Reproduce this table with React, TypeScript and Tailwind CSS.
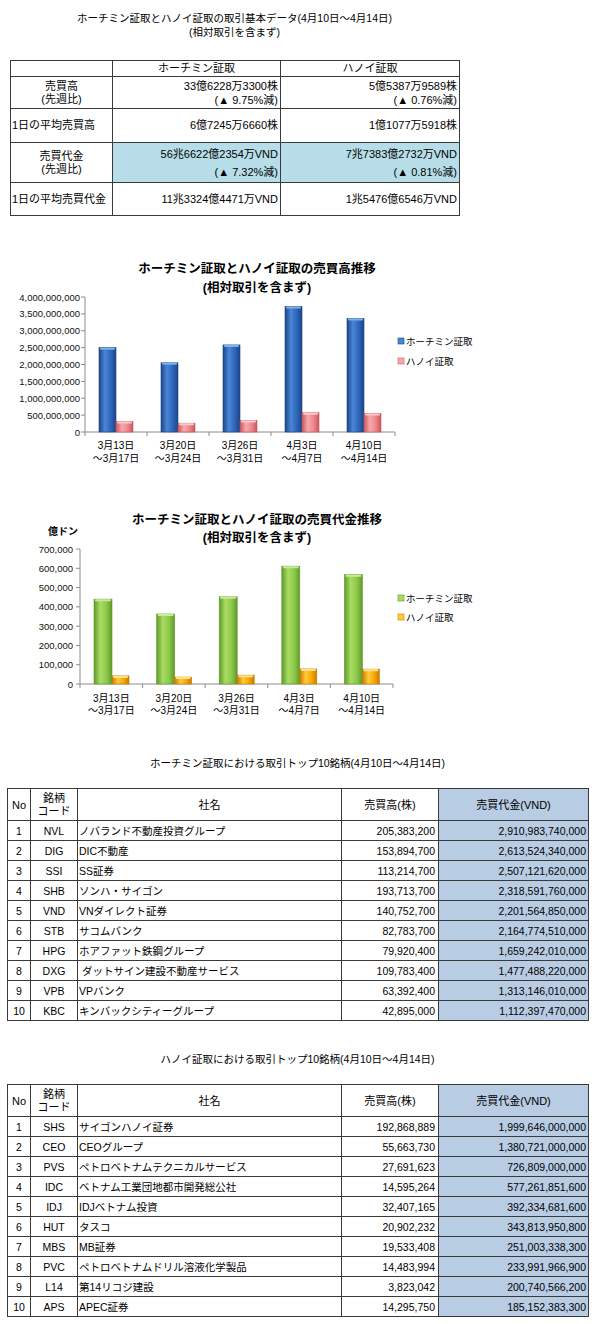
import React from 'react';

const FONT = "font-['Liberation_Sans','Noto_Sans_CJK_JP',sans-serif]";

type Stops = [string, string, string];

interface ChartProps {
  id: string;
  title: string;
  unit?: string;
  ticks: string[];
  axisX: number;
  labelRight: number;
  catW: number;
  top: number;
  base: number;
  max: number;
  a: number[];
  b: number[];
  aOff: number;
  aW: number;
  bOff: number;
  bW: number;
  colA: Stops;
  colB: Stops;
  capA: string;
  capB: string;
  titleY: [number, number];
  labelY: [number, number];
  legendY: [number, number];
}

const cats: [string, string][] = [
  ['3月13日', '～3月17日'],
  ['3月20日', '～3月24日'],
  ['3月26日', '～3月31日'],
  ['4月3日', '～4月7日'],
  ['4月10日', '～4月14日'],
];

const BarChart: React.FC<ChartProps> = (p) => {
  const plotRight = p.axisX + p.catW * 5;
  const step = (p.base - p.top) / (p.ticks.length - 1);
  const h = (v: number) => (v / p.max) * (p.base - p.top);

  return (
    <svg width={600} height={220} viewBox="0 0 600 220" className={`block ${FONT}`}>
      <defs>
        <linearGradient id={`${p.id}-a`} x1="0" x2="1" y1="0" y2="0">
          <stop offset="0%" stopColor={p.colA[0]} />
          <stop offset="35%" stopColor={p.colA[1]} />
          <stop offset="70%" stopColor={p.colA[2]} />
          <stop offset="100%" stopColor={p.colA[0]} />
        </linearGradient>
        <linearGradient id={`${p.id}-b`} x1="0" x2="1" y1="0" y2="0">
          <stop offset="0%" stopColor={p.colB[0]} />
          <stop offset="35%" stopColor={p.colB[1]} />
          <stop offset="70%" stopColor={p.colB[2]} />
          <stop offset="100%" stopColor={p.colB[0]} />
        </linearGradient>
      </defs>

      <text x={257} y={p.titleY[0]} textAnchor="middle" dominantBaseline="central" fontSize={12.5} fontWeight={700}>
        {p.title}
      </text>
      <text x={257} y={p.titleY[1]} textAnchor="middle" dominantBaseline="central" fontSize={12.5} fontWeight={700}>
        (相対取引を含まず)
      </text>

      {p.unit && (
        <text x={48} y={30} dominantBaseline="central" fontSize={10} fontWeight={700}>
          {p.unit}
        </text>
      )}

      {/* y axis */}
      {p.ticks.map((t, i) => {
        const y = p.base - step * i;
        return (
          <g key={t}>
            <text x={p.labelRight} y={y} textAnchor="end" dominantBaseline="central" fontSize={9.5} fill="#111">
              {t}
            </text>
            <line x1={p.axisX - 4} x2={p.axisX} y1={y} y2={y} stroke="#8c8c8c" strokeWidth={1} />
          </g>
        );
      })}
      <line x1={p.axisX} x2={p.axisX} y1={p.top} y2={p.base} stroke="#8c8c8c" strokeWidth={1} />
      <line x1={p.axisX} x2={plotRight} y1={p.base} y2={p.base} stroke="#8c8c8c" strokeWidth={1} />
      {[0, 1, 2, 3, 4, 5].map((i) => (
        <line
          key={i}
          x1={p.axisX + p.catW * i}
          x2={p.axisX + p.catW * i}
          y1={p.base}
          y2={p.base + 4}
          stroke="#8c8c8c"
          strokeWidth={1}
        />
      ))}

      {/* bars */}
      {cats.map((c, i) => {
        const x0 = p.axisX + p.catW * i;
        const ha = h(p.a[i]);
        const hb = h(p.b[i]);
        return (
          <g key={c[0]}>
            <rect x={x0 + p.aOff} y={p.base - ha} width={p.aW} height={ha} fill={`url(#${p.id}-a)`} stroke={p.colA[0]} strokeWidth={0.6} />
            <rect x={x0 + p.aOff + 1} y={p.base - ha} width={p.aW - 2} height={2} rx={1} fill={p.capA} />
            <rect x={x0 + p.bOff} y={p.base - hb} width={p.bW} height={hb} fill={`url(#${p.id}-b)`} stroke={p.colB[0]} strokeWidth={0.6} />
            <rect x={x0 + p.bOff + 1} y={p.base - hb} width={p.bW - 2} height={2} rx={1} fill={p.capB} />
            <text x={x0 + p.catW / 2} y={p.labelY[0]} textAnchor="middle" dominantBaseline="central" fontSize={10}>
              {c[0]}
            </text>
            <text x={x0 + p.catW / 2} y={p.labelY[1]} textAnchor="middle" dominantBaseline="central" fontSize={10}>
              {c[1]}
            </text>
          </g>
        );
      })}

      {/* legend */}
      <rect x={398} y={p.legendY[0] - 3} width={6} height={6} fill={p.colA[1]} stroke={p.colA[0]} strokeWidth={0.6} />
      <text x={406} y={p.legendY[0]} dominantBaseline="central" fontSize={9.5}>
        ホーチミン証取
      </text>
      <rect x={398} y={p.legendY[1] - 3} width={6} height={6} fill={p.colB[1]} stroke={p.colB[0]} strokeWidth={0.6} />
      <text x={406} y={p.legendY[1]} dominantBaseline="central" fontSize={9.5}>
        ハノイ証取
      </text>
    </svg>
  );
};

interface Row {
  code: string;
  name: string;
  vol: string;
  val: string;
}

const hcmRows: Row[] = [
  { code: 'NVL', name: 'ノバランド不動産投資グループ', vol: '205,383,200', val: '2,910,983,740,000' },
  { code: 'DIG', name: 'DIC不動産', vol: '153,894,700', val: '2,613,524,340,000' },
  { code: 'SSI', name: 'SS証券', vol: '113,214,700', val: '2,507,121,620,000' },
  { code: 'SHB', name: 'ソンハ・サイゴン', vol: '193,713,700', val: '2,318,591,760,000' },
  { code: 'VND', name: 'VNダイレクト証券', vol: '140,752,700', val: '2,201,564,850,000' },
  { code: 'STB', name: 'サコムバンク', vol: '82,783,700', val: '2,164,774,510,000' },
  { code: 'HPG', name: 'ホアファット鉄鋼グループ', vol: '79,920,400', val: '1,659,242,010,000' },
  { code: 'DXG', name: '\u00a0ダットサイン建設不動産サービス', vol: '109,783,400', val: '1,477,488,220,000' },
  { code: 'VPB', name: 'VPバンク', vol: '63,392,400', val: '1,313,146,010,000' },
  { code: 'KBC', name: 'キンバックシティーグループ', vol: '42,895,000', val: '1,112,397,470,000' },
];

const hnxRows: Row[] = [
  { code: 'SHS', name: 'サイゴンハノイ証券', vol: '192,868,889', val: '1,999,646,000,000' },
  { code: 'CEO', name: 'CEOグループ', vol: '55,663,730', val: '1,380,721,000,000' },
  { code: 'PVS', name: 'ペトロベトナムテクニカルサービス', vol: '27,691,623', val: '726,809,000,000' },
  { code: 'IDC', name: 'ベトナム工業団地都市開発総公社', vol: '14,595,264', val: '577,261,851,600' },
  { code: 'IDJ', name: 'IDJベトナム投資', vol: '32,407,165', val: '392,334,681,600' },
  { code: 'HUT', name: 'タスコ', vol: '20,902,232', val: '343,813,950,800' },
  { code: 'MBS', name: 'MB証券', vol: '19,533,408', val: '251,003,338,300' },
  { code: 'PVC', name: 'ペトロベトナムドリル溶液化学製品', vol: '14,483,994', val: '233,991,966,900' },
  { code: 'L14', name: '第14リコジ建設', vol: '3,823,042', val: '200,740,566,200' },
  { code: 'APS', name: 'APEC証券', vol: '14,295,750', val: '185,152,383,300' },
];

const TopTable: React.FC<{ title: string; rows: Row[] }> = ({ title, rows }) => (
  <div>
    <p className="ml-[7px] w-[581px] text-center text-[10.5px] leading-[14px]">{title}</p>
    <table className="ml-[7px] mt-[18px] w-[581px] table-fixed border-collapse text-[10.5px] leading-[12px]">
      <colgroup>
        <col className="w-[23px]" />
        <col className="w-[47px]" />
        <col className="w-[264px]" />
        <col className="w-[97px]" />
        <col className="w-[150px]" />
      </colgroup>
      <thead>
        <tr className="h-[32px] text-[11px]">
          <th className="border border-[#3a3a3a] font-normal">No</th>
          <th className="border border-[#3a3a3a] font-normal leading-[13px]">
            銘柄
            <br />
            コード
          </th>
          <th className="border border-[#3a3a3a] font-normal">社名</th>
          <th className="border border-[#3a3a3a] font-normal">売買高(株)</th>
          <th className="border border-[#3a3a3a] bg-[#b8cce4] font-normal">売買代金(VND)</th>
        </tr>
      </thead>
      <tbody>
        {rows.map((r, i) => (
          <tr key={r.code} className="h-[20px]">
            <td className="border border-[#3a3a3a] text-center">{i + 1}</td>
            <td className="border border-[#3a3a3a] text-center">{r.code}</td>
            <td className="border border-[#3a3a3a] pl-[1px] whitespace-nowrap">{r.name}</td>
            <td className="border border-[#3a3a3a] pr-[3px] text-right">{r.vol}</td>
            <td className="border border-[#3a3a3a] bg-[#b8cce4] pr-[2px] text-right">{r.val}</td>
          </tr>
        ))}
      </tbody>
    </table>
  </div>
);

export default function App() {
  const cell = 'border border-[#3a3a3a]';
  return (
    <div className={`w-[600px] bg-white pb-[10px] text-black ${FONT}`}>
      {/* basic data */}
      <div className="ml-[10px] w-[449px] pt-[11px] text-center text-[10.5px] leading-[14px]">
        <p>ホーチミン証取とハノイ証取の取引基本データ(4月10日～4月14日)</p>
        <p>(相対取引を含まず)</p>
      </div>
      <table className="ml-[10px] mt-[21px] w-[449px] table-fixed border-collapse text-[11px] leading-[13px]">
        <colgroup>
          <col className="w-[102px]" />
          <col className="w-[168px]" />
          <col className="w-[179px]" />
        </colgroup>
        <tbody>
          <tr className="h-[16px]">
            <td className={cell}></td>
            <td className={`${cell} text-center`}>ホーチミン証取</td>
            <td className={`${cell} text-center`}>ハノイ証取</td>
          </tr>
          <tr className="h-[32px]">
            <td className={`${cell} text-center`}>
              売買高
              <br />
              (先週比)
            </td>
            <td className={`${cell} pr-[2px] text-right leading-[14px]`}>
              33億6228万3300株
              <br />
              (▲ 9.75%減)
            </td>
            <td className={`${cell} pr-[2px] text-right leading-[14px]`}>
              5億5387万9589株
              <br />
              (▲ 0.76%減)
            </td>
          </tr>
          <tr className="h-[34px]">
            <td className={`${cell} pl-[1px]`}>1日の平均売買高</td>
            <td className={`${cell} pr-[2px] text-right`}>6億7245万6660株</td>
            <td className={`${cell} pr-[2px] text-right`}>1億1077万5918株</td>
          </tr>
          <tr className="h-[40px]">
            <td className={`${cell} text-center`}>
              売買代金
              <br />
              (先週比)
            </td>
            <td className={`${cell} bg-[#b7dee8] pr-[2px] text-right leading-[18px]`}>
              56兆6622億2354万VND
              <br />
              (▲ 7.32%減)
            </td>
            <td className={`${cell} bg-[#b7dee8] pr-[2px] text-right leading-[18px]`}>
              7兆7383億2732万VND
              <br />
              (▲ 0.81%減)
            </td>
          </tr>
          <tr className="h-[33px]">
            <td className={`${cell} pl-[1px]`}>1日の平均売買代金</td>
            <td className={`${cell} pr-[2px] text-right`}>11兆3324億4471万VND</td>
            <td className={`${cell} pr-[2px] text-right`}>1兆5476億6546万VND</td>
          </tr>
        </tbody>
      </table>

      {/* volume chart */}
      <div className="mt-[35px]">
        <BarChart
          id="vol"
          title="ホーチミン証取とハノイ証取の売買高推移"
          ticks={['0', '500,000,000', '1,000,000,000', '1,500,000,000', '2,000,000,000', '2,500,000,000', '3,000,000,000', '3,500,000,000', '4,000,000,000']}
          axisX={85}
          labelRight={80}
          catW={62}
          top={46}
          base={181}
          max={4}
          a={[2.5, 2.05, 2.58, 3.72, 3.36]}
          b={[0.31, 0.26, 0.34, 0.57, 0.55]}
          aOff={14}
          aW={17}
          bOff={31}
          bW={17}
          colA={['#1c4587', '#4a86d8', '#2d65b8']}
          colB={['#c9575f', '#f7a9ad', '#ec858b']}
          capA="#7fb0ee"
          capB="#fbc9cb"
          titleY={[18, 37]}
          labelY={[194, 207]}
          legendY={[90, 110]}
        />
      </div>

      {/* value chart */}
      <div className="mt-[30px]">
        <BarChart
          id="val"
          title="ホーチミン証取とハノイ証取の売買代金推移"
          unit="億ドン"
          ticks={['0', '100,000', '200,000', '300,000', '400,000', '500,000', '600,000', '700,000']}
          axisX={80}
          labelRight={73}
          catW={62.6}
          top={48}
          base={183}
          max={700}
          a={[440, 363, 452, 611, 567]}
          b={[42, 36, 46, 78, 77]}
          aOff={14}
          aW={18}
          bOff={32}
          bW={17}
          colA={['#5f9a2a', '#a9dc62', '#8cc84a']}
          colB={['#c97a00', '#ffcb3a', '#f4a800']}
          capA="#c8ec96"
          capB="#ffe28a"
          titleY={[19, 37]}
          labelY={[197, 209]}
          legendY={[97, 116]}
        />
      </div>

      <div className="mt-[35px]">
        <TopTable title="ホーチミン証取における取引トップ10銘柄(4月10日～4月14日)" rows={hcmRows} />
      </div>
      <div className="mt-[31px]">
        <TopTable title="ハノイ証取における取引トップ10銘柄(4月10日～4月14日)" rows={hnxRows} />
      </div>
    </div>
  );
}
